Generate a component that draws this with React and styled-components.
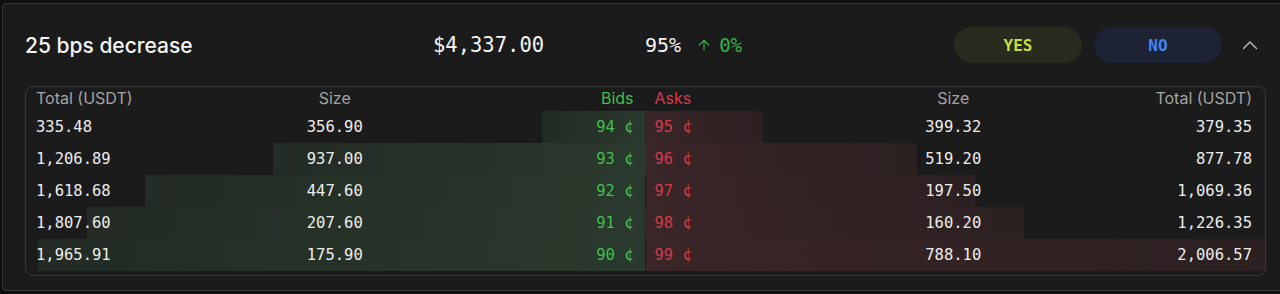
import React from 'react'
import styled, { createGlobalStyle } from 'styled-components'
import { ArrowUp } from 'lucide-react'

const GlobalStyle = createGlobalStyle`
  html, body {
    margin: 0;
    padding: 0;
    background: #0f0f0f;
    overflow: hidden;
  }
  * { box-sizing: border-box; }
`

const MAX_TOTAL = 2006.57

const bids = [
  { total: '335.48', size: '356.90', price: 94, raw: 335.48 },
  { total: '1,206.89', size: '937.00', price: 93, raw: 1206.89 },
  { total: '1,618.68', size: '447.60', price: 92, raw: 1618.68 },
  { total: '1,807.60', size: '207.60', price: 91, raw: 1807.6 },
  { total: '1,965.91', size: '175.90', price: 90, raw: 1965.91 },
]

const asks = [
  { total: '379.35', size: '399.32', price: 95, raw: 379.35 },
  { total: '877.78', size: '519.20', price: 96, raw: 877.78 },
  { total: '1,069.36', size: '197.50', price: 97, raw: 1069.36 },
  { total: '1,226.35', size: '160.20', price: 98, raw: 1226.35 },
  { total: '2,006.57', size: '788.10', price: 99, raw: 2006.57 },
]

const App = () => {
  return (
    <>
      <GlobalStyle />
      <Card>
        <Header>
          <Title>25 bps decrease</Title>
          <Price>$4,337.00</Price>
          <Chance>
            95%
            <Change>
              <ArrowUp size={16} strokeWidth={1.7} />
              0%
            </Change>
          </Chance>
          <Actions>
            <Pill $kind="yes">YES</Pill>
            <Pill $kind="no">NO</Pill>
            <Toggle>
              <svg width="16" height="10" viewBox="0 0 16 10" fill="none">
                <path d="M1.5 8.5L8 2l6.5 6.5" stroke="#b5b5b5" strokeWidth="1.5" strokeLinecap="round" strokeLinejoin="round" />
              </svg>
            </Toggle>
          </Actions>
        </Header>

        <Book>
          <Row $head>
            <Half $side="bid">
              <Label $align="left">Total (USDT)</Label>
              <Label $align="center">Size</Label>
              <Label $align="right" $color="#3fbf4a">Bids</Label>
            </Half>
            <Half $side="ask">
              <Label $align="left" $color="#d9394c">Asks</Label>
              <Label $align="center">Size</Label>
              <Label $align="right">Total (USDT)</Label>
            </Half>
          </Row>
          {bids.map((b, i) => {
            const a = asks[i]
            return (
              <Row key={b.price}>
                <Half $side="bid" $depth={(b.raw / MAX_TOTAL) * 100}>
                  <Num $align="left">{b.total}</Num>
                  <Num $align="center">{b.size}</Num>
                  <Cents $align="right" $color="#3fbf4a">{b.price} ¢</Cents>
                </Half>
                <Half $side="ask" $depth={(a.raw / MAX_TOTAL) * 100}>
                  <Cents $align="left" $color="#d23a4b">{a.price} ¢</Cents>
                  <Num $align="center">{a.size}</Num>
                  <Num $align="right">{a.total}</Num>
                </Half>
              </Row>
            )
          })}
        </Book>
      </Card>
    </>
  )
}

export default App

const Card = styled.div`
  margin: 3px 0 0 2px;
  width: 1287px;
  height: 288px;
  background: #1b1b1b;
  border: 1px solid #363636;
  border-radius: 4px;
  padding: 22px 22px 0 22px;
  font-family: Inter, "Noto Sans", sans-serif;
  color: #f2f2f2;
`

const Header = styled.div`
  display: flex;
  align-items: center;
  height: 38px;
  padding-right: 4px;
`

const Title = styled.div`
  width: 408px;
  font-size: 21px;
  font-weight: 500;
  color: #f4f4f4;
`

const Price = styled.div`
  width: 212px;
  font-family: "DejaVu Sans Mono", "Liberation Mono", monospace;
  font-size: 20.5px;
  color: #f4f4f4;
`

const Chance = styled.div`
  display: flex;
  align-items: center;
  gap: 15px;
  font-family: "DejaVu Sans Mono", "Liberation Mono", monospace;
  font-size: 20px;
  color: #f4f4f4;
`

const Change = styled.span`
  display: flex;
  align-items: center;
  gap: 7px;
  color: #35b449;
  font-size: 19px;
`

const Actions = styled.div`
  margin-left: auto;
  display: flex;
  align-items: center;
  gap: 12px;
`

const Pill = styled.button`
  width: 128px;
  height: 36px;
  border: none;
  border-radius: 18px;
  font-family: "DejaVu Sans Mono", monospace;
  font-weight: 700;
  font-size: 16px;
  background: ${p => (p.$kind === 'yes' ? '#292b1f' : '#1e2235')};
  color: ${p => (p.$kind === 'yes' ? '#c6dd3f' : '#4585ee')};
`

const Toggle = styled.div`
  width: 24px;
  height: 24px;
  margin-left: 4px;
  display: flex;
  align-items: center;
  justify-content: center;
`

const Book = styled.div`
  margin-top: 22px;
  border: 1px solid #3a3a3a;
  border-radius: 8px;
  padding-bottom: 4px;
  overflow: hidden;
`

const Row = styled.div`
  display: grid;
  grid-template-columns: 1fr 1fr;
  height: ${p => (p.$head ? '24px' : '32px')};
`

const Half = styled.div`
  display: grid;
  grid-template-columns: 1fr 1fr 1fr;
  align-items: center;
  padding: ${p => (p.$side === 'bid' ? '0 12px 0 10px' : '0 13px 0 9px')};
  background: ${p =>
    p.$depth
      ? p.$side === 'bid'
        ? `linear-gradient(to left, #2a392d, #232b24) right / ${p.$depth}% 100% no-repeat`
        : `linear-gradient(to right, #3a2527, #2c2021) left / ${p.$depth}% 100% no-repeat`
      : 'transparent'};
`

const Label = styled.div`
  align-self: start;
  padding-top: 1px;
  text-align: ${p => p.$align};
  font-size: 16px;
  color: ${p => p.$color || '#a3a3a3'};
`

const Num = styled.div`
  text-align: ${p => p.$align};
  font-family: "DejaVu Sans Mono", "Liberation Mono", monospace;
  font-size: 15.5px;
  color: #ececec;
`

const Cents = styled(Num)`
  color: ${p => p.$color};
`
